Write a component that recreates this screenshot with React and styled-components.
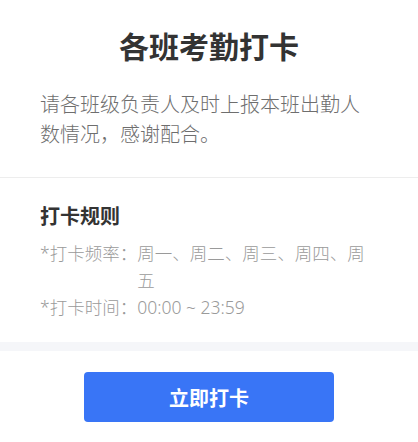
import styled, { createGlobalStyle } from "styled-components";

const GlobalStyle = createGlobalStyle`
  html, body {
    margin: 0;
    padding: 0;
    background: #fff;
  }

  body {
    font-family: "Noto Sans CJK SC", "Noto Sans", sans-serif;
  }
`

const Page = styled.main`
  width: 100%;
  display: flex;
  flex-direction: column;
`

const Header = styled.section`
  padding: 24px 40px 28px;
  border-bottom: 1px solid #ededed;
`

const Title = styled.h1`
  margin: 0;
  font-size: 30px;
  line-height: 42px;
  font-weight: bold;
  text-align: center;
  color: #333;
`

const Description = styled.p`
  margin: 23px 0 0 0;
  font-size: 20px;
  line-height: 30px;
  font-weight: 300;
  color: #6e6e6e;
`

const Rules = styled.section`
  padding: 23px 40px 21px;
`

const RulesTitle = styled.h2`
  margin: 0 0 9px 0;
  font-size: 20px;
  line-height: 30px;
  font-weight: bold;
  color: #333;
`

const RuleRow = styled.div`
  display: flex;
  font-family: "Noto Sans", "Noto Sans CJK SC", sans-serif;
  font-size: 17.5px;
  line-height: 27px;
  font-weight: 300;
  color: #9a9a9a;
`

const RuleLabel = styled.span`
  flex-shrink: 0;
`

const RuleValue = styled.span`
  flex: 1;
  min-width: 0;
`

const Spacer = styled.div`
  height: 9px;
  background: #f5f6f9;
`

const Footer = styled.section`
  display: flex;
  justify-content: center;
  padding: 21px 0 20px;
`

const Button = styled.button`
  width: 250px;
  height: 50px;
  border: none;
  border-radius: 4px;
  background: #3975f6;
  color: #fff;
  font-family: inherit;
  font-size: 20px;
  font-weight: bold;
  cursor: pointer;
`

const rules = [
  { label: "*打卡频率：", value: "周一、周二、周三、周四、周五" },
  { label: "*打卡时间：", value: "00:00 ~ 23:59" },
]

export default function App() {
  return (
    <>
      <GlobalStyle />
      <Page>
        <Header>
          <Title>各班考勤打卡</Title>
          <Description>
            请各班级负责人及时上报本班出勤人数情况，感谢配合。
          </Description>
        </Header>
        <Rules>
          <RulesTitle>打卡规则</RulesTitle>
          {rules.map((r) => (
            <RuleRow key={r.label}>
              <RuleLabel>{r.label}</RuleLabel>
              <RuleValue>{r.value}</RuleValue>
            </RuleRow>
          ))}
        </Rules>
        <Spacer />
        <Footer>
          <Button>立即打卡</Button>
        </Footer>
      </Page>
    </>
  )
}
